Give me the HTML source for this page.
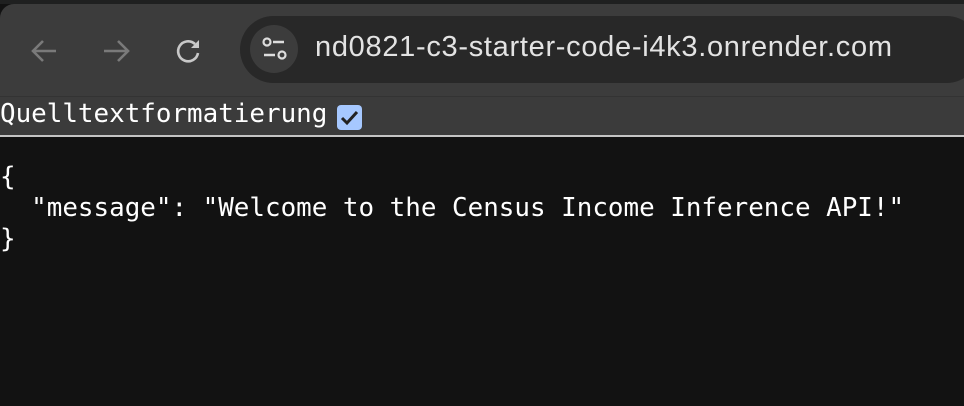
<!DOCTYPE html>
<html><head><style>
body{margin:0;width:964px;height:406px;background:#121212;overflow:hidden;position:relative;font-family:"DejaVu Sans Mono","Liberation Mono",monospace}
.top{position:absolute;left:0;top:0;width:964px;height:4px;background:#1f2020}
.tb{position:absolute;left:0;top:4px;width:964px;height:92px;background:#3c3c3c;border-top-left-radius:14px}
.url{position:absolute;left:240px;top:16px;width:740px;height:67px;background:#282828;border-radius:34px}
.site{position:absolute;left:250px;top:25px;width:48px;height:48px;border-radius:50%;background:#3c3c3c}
.ut{position:absolute;left:315px;top:31px;font:29px "Liberation Sans",sans-serif;color:#e3e3e3;letter-spacing:0.7px}
.sep{position:absolute;left:0;top:96px;width:964px;height:1px;background:#333}
.bar{position:absolute;left:0;top:97px;width:964px;height:38px;background:#3b3b3b}
.line{position:absolute;left:0;top:135px;width:964px;height:2px;background:#c4c4c4}
.lbl{position:absolute;left:0;top:99px;font-size:25.9px;color:#fff}
.cb{position:absolute;left:337px;top:105px;width:25px;height:25px;background:#a6c8ff;border-radius:4px}
pre{position:absolute;left:0;top:162px;margin:0;font-size:25.9px;line-height:31px;color:#fff;font-family:"DejaVu Sans Mono",monospace}
</style></head><body>
<div class="top"></div>
<div class="tb"></div>
<svg style="position:absolute;left:28px;top:36px" width="32" height="30" viewBox="0 0 32 30"><path d="M28 15H5M15 5L5 15l10 10" stroke="#7a7a7a" stroke-width="2.6" fill="none"/></svg>
<svg style="position:absolute;left:101px;top:36px" width="32" height="30" viewBox="0 0 32 30"><path d="M3 15h23M17 5l10 10-10 10" stroke="#7a7a7a" stroke-width="2.6" fill="none"/></svg>
<svg style="position:absolute;left:174px;top:36px" width="30" height="30" viewBox="0 0 30 30"><path d="M24 17A10 10 0 1 1 21 8" stroke="#c8c8c8" stroke-width="2.6" fill="none"/><path d="M25 4v8h-8z" fill="#c8c8c8"/></svg>
<div class="url"></div>
<div class="site"></div>
<svg style="position:absolute;left:260px;top:36px" width="30" height="26" viewBox="0 0 30 26"><circle cx="7" cy="6" r="3.5" stroke="#ddd" stroke-width="2.2" fill="none"/><path d="M13 6h11M4 19h11" stroke="#ddd" stroke-width="2.4"/><circle cx="22" cy="19" r="3.5" stroke="#ddd" stroke-width="2.2" fill="none"/></svg>
<div class="ut">nd0821-c3-starter-code-i4k3.onrender.com</div>
<div class="sep"></div>
<div class="bar"></div>
<div class="lbl">Quelltextformatierung</div>
<div class="cb"><svg width="25" height="25" viewBox="0 0 25 25"><path d="M5 13l5 5 10-11" stroke="#222" stroke-width="3" fill="none"/></svg></div>
<div class="line"></div>
<pre>{
  "message": "Welcome to the Census Income Inference API!"
}</pre>
</body></html>
